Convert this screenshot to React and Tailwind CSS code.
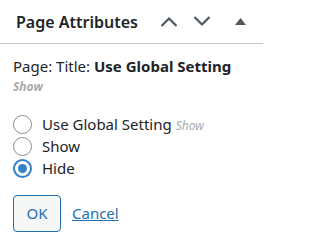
import React, { useState } from 'react';

function Chevron({ up }) {
  return (
    <svg width="18" height="11" viewBox="0 0 18 11" fill="none" stroke="#50575e" strokeWidth="2.2">
      {up ? <path d="M1.5 10L9 2.5L16.5 10" /> : <path d="M1.5 1L9 8.5L16.5 1" />}
    </svg>
  );
}

function Radio({ checked, label, note, onClick }) {
  return (
    <label className="flex items-center h-[22px] cursor-pointer" onClick={onClick}>
      {checked ? (
        <span className="w-[19px] h-[19px] rounded-full border-2 border-[#3582c4] flex items-center justify-center shrink-0">
          <span className="w-[9px] h-[9px] rounded-full bg-[#3582c4]" />
        </span>
      ) : (
        <span className="w-[19px] h-[19px] rounded-full border border-[#8c8f94] bg-white shrink-0" />
      )}
      <span className="ml-[10px] text-[15px] text-[#1d2327]">
        {label}
        {note && <span className="ml-1 text-[12px] italic text-[#a7aaad]">{note}</span>}
      </span>
    </label>
  );
}

export default function App() {
  const [value, setValue] = useState('hide');

  return (
    <div className="w-[263px] h-[245px] bg-white overflow-hidden" style={{ fontFamily: '"Noto Sans", "Open Sans", sans-serif' }}>
      <div className="h-[44px] flex items-center border-b border-[#c3c4c7] pl-[16px]">
        <h2 className="text-[16px] font-semibold text-[#1d2327] flex-1">Page Attributes</h2>
        <div className="flex items-center">
          <span className="w-[33px] flex justify-center"><Chevron up /></span>
          <span className="w-[33px] flex justify-center"><Chevron /></span>
          <span className="w-[45px] flex justify-center">
            <svg width="11" height="7" viewBox="0 0 11 7"><path d="M5.5 0L11 7H0z" fill="#50575e" /></svg>
          </span>
        </div>
      </div>
      <div className="px-[13px] pt-[11px]">
        <p className="text-[15px] text-[#1d2327] leading-[22px]">
          Page: Title: <span className="font-bold">Use Global Setting</span>
        </p>
        <p className="text-[12px] italic font-bold text-[#a7aaad] leading-[18px] mt-[1px]">Show</p>
        <div className="mt-[17px] flex flex-col">
          <Radio checked={value === 'global'} label="Use Global Setting" note="Show" onClick={() => setValue('global')} />
          <Radio checked={value === 'show'} label="Show" onClick={() => setValue('show')} />
          <Radio checked={value === 'hide'} label="Hide" onClick={() => setValue('hide')} />
        </div>
        <div className="mt-[16px] flex items-center">
          <button className="w-[48px] h-[37px] border border-[#2271b1] rounded-[4px] bg-[#f6f7f7] text-[#2271b1] text-[15px]">OK</button>
          <a href="#" className="ml-[11px] text-[15px] text-[#2271b1] underline">Cancel</a>
        </div>
      </div>
    </div>
  );
}
